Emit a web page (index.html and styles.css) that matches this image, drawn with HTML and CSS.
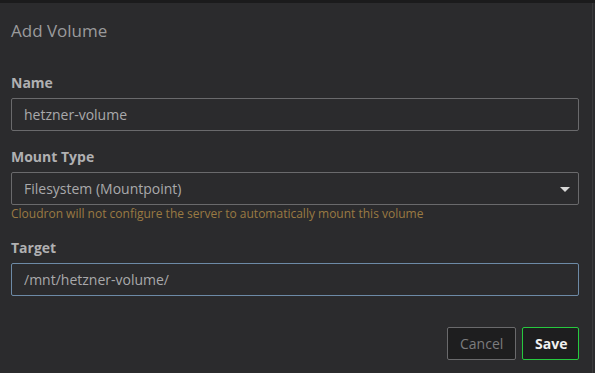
FILE: index.html
```html
<!DOCTYPE html>
<html lang="en">
<head>
    <meta charset="UTF-8">
    <title>Add Volume</title>
    <link rel="stylesheet" href="styles.css">
</head>
<body>
    <div class="topbar"></div>
    <div class="modal">
        <h4 class="modal-title">Add Volume</h4>
        <form class="modal-body">
            <div class="form-group">
                <label class="control-label">Name</label>
                <input class="form-control" type="text" value="hetzner-volume">
            </div>
            <div class="form-group">
                <label class="control-label">Mount Type</label>
                <div class="select-wrap">
                    <div class="form-control select">Filesystem (Mountpoint)</div>
                    <span class="caret"></span>
                </div>
                <p class="help-text">Cloudron will not configure the server to automatically mount this volume</p>
            </div>
            <div class="form-group">
                <label class="control-label">Target</label>
                <input class="form-control focused" type="text" value="/mnt/hetzner-volume/">
            </div>
        </form>
        <div class="modal-footer">
            <button class="btn btn-default">Cancel</button>
            <button class="btn btn-success">Save</button>
        </div>
    </div>
</body>
</html>
```

FILE: styles.css
```css
html, body {
    margin: 0;
    padding: 0;
    height: 100%;
}

body {
    background: #2b2b2d;
    font-family: 'Open Sans', 'Noto Sans', sans-serif;
    font-size: 14px;
    color: #b4b4b4;
    display: flex;
    flex-direction: column;
    overflow: hidden;
}

.topbar {
    height: 3px;
    background: #1b1b1c;
}

.modal {
    flex: 1;
    margin-right: 2px;
    border-right: 1px solid #3a3a3c;
    padding: 0 13px 0 11px;
}

.modal-title {
    margin: 15px 0 0;
    font-size: 17px;
    font-weight: 400;
    line-height: 26px;
    color: #9a9a9c;
}

.modal-body {
    margin-top: 29px;
}

.form-group {
    margin-bottom: 16px;
}

.control-label {
    display: block;
    font-weight: 700;
    line-height: 20px;
    margin-bottom: 5px;
    color: #b0b0b2;
}

.form-control {
    display: block;
    box-sizing: border-box;
    width: 100%;
    height: 33px;
    padding: 0 12px;
    background: #2b2b2d;
    border: 1px solid #6a6a6c;
    border-radius: 2px;
    font-family: inherit;
    font-size: 14px;
    color: #a9a9ab;
    outline: none;
}

.form-control.focused {
    border-color: #6d8aa6;
}

.select-wrap {
    position: relative;
}

.select {
    line-height: 31px;
}

.caret {
    position: absolute;
    right: 9px;
    top: 15px;
    border-left: 5px solid transparent;
    border-right: 5px solid transparent;
    border-top: 5px solid #d8d8d8;
}

.help-text {
    margin: 0;
    font-size: 12px;
    line-height: 17px;
    color: #9a7a43;
}

.modal-footer {
    display: flex;
    justify-content: flex-end;
    gap: 6px;
    margin-top: 31px;
}

.btn {
    height: 33px;
    padding: 0 12px;
    background: #1e1e1f;
    border: 1px solid #6a6a6c;
    border-radius: 2px;
    font-family: inherit;
    font-size: 14px;
}

.btn-default {
    color: #7c7c7e;
    width: 69px;
}

.btn-success {
    color: #f0f0f0;
    font-weight: 700;
    border-color: #27c93f;
    width: 57px;
}
```
